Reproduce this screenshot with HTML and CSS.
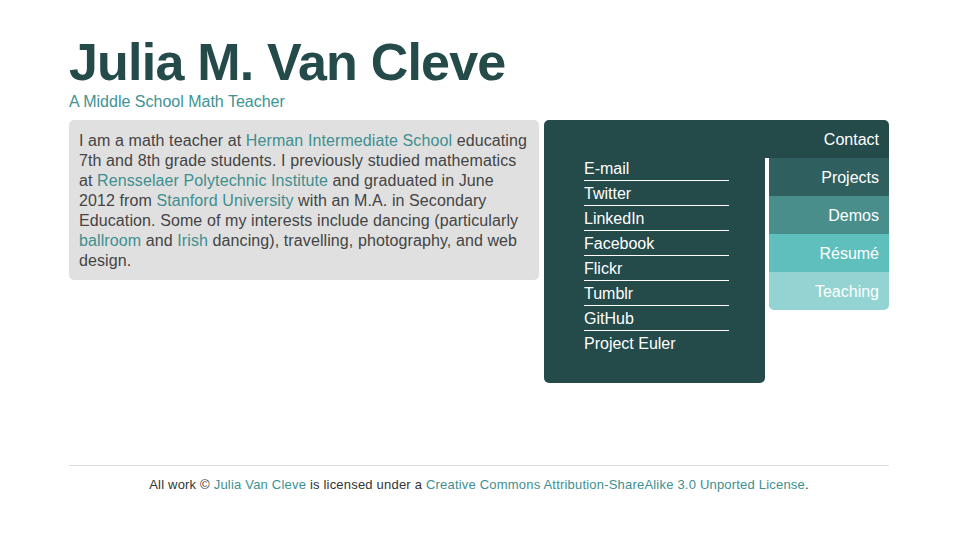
FILE: index.html
```html
<!DOCTYPE html>
<html lang="en">
<head>
<meta charset="utf-8">
<title>Julia M. Van Cleve</title>
<link rel="stylesheet" href="styles.css">
</head>
<body>
<div class="page">
  <header class="masthead">
    <h1 class="name">Julia M. Van Cleve</h1>
    <p class="tagline">A Middle School Math Teacher</p>
  </header>
  <main class="main">
    <section class="about">
      I am a math teacher at <a href="#">Herman Intermediate School</a> educating 7th and 8th grade students. I previously studied mathematics at <a href="#">Rensselaer Polytechnic Institute</a> and graduated in June 2012 from <a href="#">Stanford University</a> with an M.A. in Secondary Education. Some of my interests include dancing (particularly <a href="#">ballroom</a> and <a href="#">Irish</a> dancing), travelling, photography, and web design.
    </section>
    <section class="tabs">
      <div class="panel">
        <ul class="links">
          <li><a href="#">E-mail</a></li>
          <li><a href="#">Twitter</a></li>
          <li><a href="#">LinkedIn</a></li>
          <li><a href="#">Facebook</a></li>
          <li><a href="#">Flickr</a></li>
          <li><a href="#">Tumblr</a></li>
          <li><a href="#">GitHub</a></li>
          <li><a href="#">Project Euler</a></li>
        </ul>
      </div>
      <nav class="nav">
        <a class="tab tab-contact" href="#">Contact</a>
        <a class="tab tab-projects" href="#">Projects</a>
        <a class="tab tab-demos" href="#">Demos</a>
        <a class="tab tab-resume" href="#">Résumé</a>
        <a class="tab tab-teaching" href="#">Teaching</a>
      </nav>
    </section>
  </main>
  <footer class="footer">
    All work © <a href="#">Julia Van Cleve</a> is licensed under a <a href="#">Creative Commons Attribution-ShareAlike 3.0 Unported License</a>.
  </footer>
</div>
</body>
</html>
```
FILE: styles.css
```css
html, body {
  margin: 0;
  padding: 0;
  background: #fff;
}
body {
  padding-left: 3px;
  font-family: "Liberation Sans", Arial, Helvetica, sans-serif;
  color: #444;
}
a {
  color: #3e8f8f;
  text-decoration: none;
}
.page {
  width: 820px;
  margin: 0 auto;
}
.masthead {
  padding-top: 36px;
}
.name {
  margin: 0 0 3px;
  font-size: 52px;
  line-height: 52px;
  font-weight: bold;
  color: #244a4a;
  letter-spacing: -0.8px;
}
.tagline {
  margin: 0;
  padding-top: 1px;
  font-size: 16px;
  line-height: 20px;
  color: #3e9393;
}
.main {
  display: flex;
  align-items: flex-start;
  gap: 5px;
  margin-top: 8px;
}
.about {
  width: 470px;
  box-sizing: border-box;
  padding: 11px 10px 9px;
  background: #e0e0e0;
  border-radius: 5px;
  font-size: 16px;
  line-height: 20px;
  letter-spacing: 0.1px;
  color: #444;
}
.tabs {
  display: flex;
  align-items: flex-start;
  width: 345px;
}
.panel {
  width: 221px;
  box-sizing: border-box;
  padding: 36px 0 28px 40px;
  background: #244a4a;
  border-radius: 5px 0 5px 5px;
}
.links {
  list-style: none;
  margin: 0;
  padding: 0;
  width: 145px;
}
.links li {
  padding: 3px 0 1px;
  font-size: 16px;
  line-height: 20px;
  border-bottom: 1px solid #fff;
}
.links li:last-child {
  border-bottom: none;
}
.links a {
  color: #fff;
}
.nav {
  display: flex;
  flex-direction: column;
  width: 124px;
}
.tab {
  display: block;
  margin-left: 4px;
  padding: 11px 10px 9px 0;
  font-size: 16px;
  line-height: 18px;
  text-align: right;
  color: #fff;
}
.tab-contact {
  margin-left: 0;
  background: #244a4a;
  border-top-right-radius: 5px;
}
.tab-projects { background: #2f5f5e; }
.tab-demos { background: #4a8e8b; }
.tab-resume { background: #5fbfbd; }
.tab-teaching {
  background: #93d4d3;
  border-radius: 0 0 5px 5px;
}
.footer {
  margin-top: 82px;
  border-top: 1px solid #ddd;
  padding-top: 11px;
  font-size: 13px;
  line-height: 16px;
  letter-spacing: 0.2px;
  text-align: center;
  color: #333;
}
```
